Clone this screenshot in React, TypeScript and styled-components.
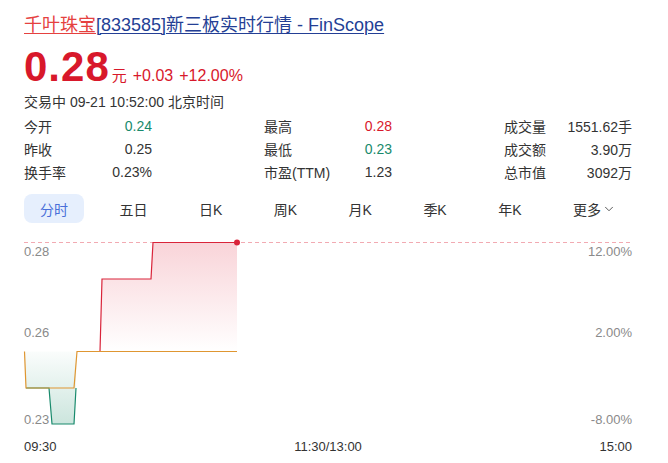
import React from "react";
import styled, { createGlobalStyle } from "styled-components";
import { ChevronDown } from "lucide-react";

const Global = createGlobalStyle`
  html, body { margin: 0; padding: 0; background: #fff; }
  body { font-family: "Liberation Sans", Arial, "Noto Sans CJK SC", sans-serif; color: #333; }
`;

const RED = "#d8182b";
const GREEN = "#188a6c";

const Page = styled.div`
  width: 608px;
  padding: 13px 36px 0 24px;
`;

const Title = styled.div`
  font-size: 18px;
  line-height: 24px;
  white-space: nowrap;
`;

const TitleLink = styled.a<{ $red?: boolean }>`
  color: ${(p) => (p.$red ? "#e5413f" : "#243f95")};
  text-decoration: underline;
  text-underline-offset: 2px;
  text-decoration-thickness: 1px;
`;

const PriceRow = styled.div`
  margin-top: 9px;
  display: flex;
  align-items: baseline;
  color: ${RED};
  height: 41px;
`;

const BigPrice = styled.span`
  font-size: 42px;
  line-height: 41px;
  font-weight: bold;
  letter-spacing: 1px;
`;

const Unit = styled.span`
  font-size: 15px;
  margin-left: 2px;
`;

const Change = styled.span`
  font-size: 16px;
  margin-left: 6px;
`;

const Meta = styled.div`
  margin-top: 5px;
  font-size: 14px;
  line-height: 20px;
  color: #333;
`;

const Stats = styled.div`
  margin-top: 2px;
  display: grid;
  grid-template-columns: repeat(3, 128px);
  column-gap: 112px;
  grid-auto-rows: 23px;
`;

const StatCell = styled.div`
  display: flex;
  justify-content: space-between;
  align-items: center;
  font-size: 14px;
`;

const StatLabel = styled.span`
  color: #333;
`;

const StatValue = styled.span<{ $c?: string }>`
  color: ${(p) => p.$c || "#333"};
`;

const Tabs = styled.div`
  margin-top: 11px;
  display: flex;
  justify-content: space-between;
  align-items: center;
`;

const Tab = styled.div<{ $active?: boolean }>`
  height: 29px;
  padding: 0 16px;
  display: flex;
  align-items: center;
  font-size: 14px;
  border-radius: 8px;
  color: ${(p) => (p.$active ? "#4a6fd9" : "#333")};
  background: ${(p) => (p.$active ? "#e6effd" : "transparent")};
`;

const Chevron = styled(ChevronDown)`
  margin-left: 1px;
  margin-top: 1px;
  color: #444;
`;

const ChartSvg = styled.svg`
  display: block;
  margin-top: 13px;
  overflow: visible;
`;

const TimeAxis = styled.div`
  margin-top: 10px;
  display: flex;
  justify-content: space-between;
  font-size: 13px;
  line-height: 18px;
  color: #333;
`;

const stats: [string, string, string?][] = [
  ["今开", "0.24", GREEN],
  ["最高", "0.28", RED],
  ["成交量", "1551.62手"],
  ["昨收", "0.25"],
  ["最低", "0.23", GREEN],
  ["成交额", "3.90万"],
  ["换手率", "0.23%"],
  ["市盈(TTM)", "1.23"],
  ["总市值", "3092万"],
];

const tabs = ["分时", "五日", "日K", "周K", "月K", "季K", "年K"];

function Chart() {
  const lab = { fontSize: 13, fill: "#8a8a8a", fontFamily: "Liberation Sans, Arial, sans-serif" } as const;
  return (
    <ChartSvg width={608} height={192} viewBox="0 0 608 192">
      <defs>
        <linearGradient id="rf" x1="0" y1="0" x2="0" y2="1">
          <stop offset="0" stopColor="#e0283f" stopOpacity="0.2" />
          <stop offset="1" stopColor="#e0283f" stopOpacity="0" />
        </linearGradient>
        <linearGradient id="gf" x1="0" y1="0" x2="0" y2="1">
          <stop offset="0" stopColor="#168a66" stopOpacity="0.02" />
          <stop offset="1" stopColor="#168a66" stopOpacity="0.22" />
        </linearGradient>
      </defs>
      <line x1="0" y1="6.5" x2="608" y2="6.5" stroke="#f2aab2" strokeWidth="1" strokeDasharray="4 3" />
      <path d="M53,115.5 L76,115.5 L78,43 L127,43 L129,6.5 L213,6.5 L213,115.5 Z" fill="url(#rf)" />
      <path d="M0,115.5 L2,152 L25,152 L28,188 L50,188 L53,115.5 Z" fill="url(#gf)" />
      <path d="M2,152 L25,152 L28,188 L50,188 L52,152" fill="none" stroke={GREEN} strokeWidth="1.2" />
      <path d="M76,115.5 L78,43 L127,43 L129,6.5 L213,6.5" fill="none" stroke="#d9243a" strokeWidth="1.2" />
      <path d="M0.5,115.5 L2,152 L50,152 L53,115.5 L213,115.5" fill="none" stroke="#df9631" strokeWidth="1.2" />
      <circle cx="213" cy="6.5" r="3" fill="#d9243a" />
      <text x="0" y="20" {...lab}>0.28</text>
      <text x="0" y="101" {...lab}>0.26</text>
      <text x="0" y="188" {...lab}>0.23</text>
      <text x="608" y="20" textAnchor="end" {...lab}>12.00%</text>
      <text x="608" y="101" textAnchor="end" {...lab}>2.00%</text>
      <text x="608" y="188" textAnchor="end" {...lab}>-8.00%</text>
    </ChartSvg>
  );
}

export default function App() {
  return (
    <Page>
      <Global />
      <Title>
        <TitleLink $red>千叶珠宝</TitleLink>
        <TitleLink>[833585]新三板实时行情 - FinScope</TitleLink>
      </Title>
      <PriceRow>
        <BigPrice>0.28</BigPrice>
        <Unit>元</Unit>
        <Change>+0.03</Change>
        <Change>+12.00%</Change>
      </PriceRow>
      <Meta>交易中 09-21 10:52:00 北京时间</Meta>
      <Stats>
        {stats.map(([l, v, c]) => (
          <StatCell key={l}>
            <StatLabel>{l}</StatLabel>
            <StatValue $c={c}>{v}</StatValue>
          </StatCell>
        ))}
      </Stats>
      <Tabs>
        {tabs.map((t, i) => (
          <Tab key={t} $active={i === 0}>{t}</Tab>
        ))}
        <Tab>
          更多
          <Chevron size={14} strokeWidth={1.5} />
        </Tab>
      </Tabs>
      <Chart />
      <TimeAxis>
        <span>09:30</span>
        <span>11:30/13:00</span>
        <span>15:00</span>
      </TimeAxis>
    </Page>
  );
}
